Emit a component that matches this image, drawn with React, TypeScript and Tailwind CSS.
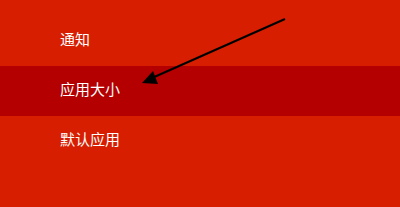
import React from "react";

const items = ["通知", "应用大小", "默认应用"];

export default function App() {
  return (
    <div
      className="relative w-[400px] h-[207px] bg-[#d81e00] pt-[16px] overflow-hidden"
      style={{ fontFamily: '"Noto Sans CJK SC", "Noto Sans", sans-serif' }}
    >
      {items.map((t, i) => (
        <div
          key={t}
          className={
            i === 1
              ? "h-[50px] flex items-center pl-[60px] pb-[3px] bg-[#b40000] text-white text-[15px]"
              : "h-[50px] flex items-center pl-[60px] pb-[3px] text-white text-[15px]"
          }
        >
          {t}
        </div>
      ))}

      {/* arrow */}
      <svg className="absolute left-0 top-0" width="400" height="207">
        <line x1="285" y1="19" x2="152" y2="78" stroke="#000" strokeWidth="2" />
        <polygon points="142,83 153,71 158,84" fill="#000" />
      </svg>
    </div>
  );
}
